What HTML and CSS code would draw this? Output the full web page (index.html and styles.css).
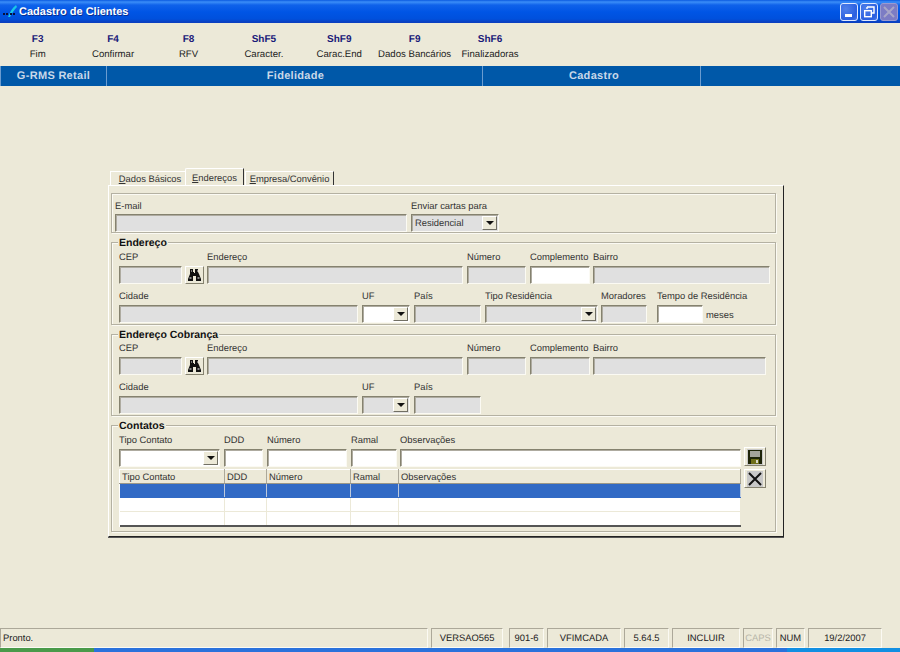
FILE: index.html
```html
<!DOCTYPE html>
<html lang="pt">
<head>
<meta charset="utf-8">
<title>Cadastro de Clientes</title>
<link rel="stylesheet" href="styles.css">
</head>
<body>
<div class="window">
  <header class="titlebar">
    <svg class="app-icon" width="16" height="16" viewBox="0 0 16 16"><path d="M6 13 C8 8 10 4 14 1 L15 3 C12 6 10 9 8 13 Z" fill="#19c8e8"/><path d="M1 9h2v2H1zM4 9h2v2H4zM8 9h2v2H8zM11 9h2v2h-2z" fill="#08103a"/></svg>
    <span class="title-text">Cadastro de Clientes</span>
    <div class="win-btns">
      <div class="win-btn"><svg width="16" height="16" viewBox="0 0 16 16"><rect x="4" y="10" width="7" height="3" fill="#fff"/></svg></div>
      <div class="win-btn"><svg width="16" height="16" viewBox="0 0 16 16"><path d="M6 3h7v6h-2M6 3v2" fill="none" stroke="#fff" stroke-width="1.4"/><rect x="3.7" y="6.7" width="6.6" height="6" fill="none" stroke="#fff" stroke-width="1.4"/></svg></div>
      <div class="win-btn off"><svg width="16" height="16" viewBox="0 0 16 16"><path d="M3 3l10 10M13 3L3 13" stroke="#a8a6c8" stroke-width="2"/></svg></div>
    </div>
  </header>

  <nav class="toolbar">
    <div class="tool"><b>F3</b><span>Fim</span></div>
    <div class="tool"><b>F4</b><span>Confirmar</span></div>
    <div class="tool"><b>F8</b><span>RFV</span></div>
    <div class="tool"><b>ShF5</b><span>Caracter.</span></div>
    <div class="tool"><b>ShF9</b><span>Carac.End</span></div>
    <div class="tool"><b>F9</b><span>Dados Bancários</span></div>
    <div class="tool"><b>ShF6</b><span>Finalizadoras</span></div>
  </nav>

  <div class="crumbs">
    <div class="crumb c1">G-RMS Retail</div>
    <div class="crumb c2">Fidelidade</div>
    <div class="crumb c3">Cadastro</div>
    <div class="crumb c4"></div>
  </div>

  <main class="content">
    <div class="tabs">
      <div class="tab t1"><u>D</u>ados Básicos</div>
      <div class="tab t2 active"><u>E</u>ndereços</div>
      <div class="tab t3"><u>E</u>mpresa/Convênio</div>
    </div>
    <div class="panel">
      <section class="group g-mail">
        <div class="row">
          <div class="field w292 email"><label>E-mail</label><input class="inp" disabled></div>
          <div class="field w88 email"><label>Enviar cartas para</label>
            <div class="combo off"><span>Residencial</span><i class="arrow"></i></div></div>
        </div>
      </section>

      <section class="group g-end">
        <span class="legend">Endereço</span>
        <div class="row">
          <div class="field w63"><label>CEP</label><input class="inp" disabled></div>
          <button class="bin" type="button"><svg width="15" height="14" viewBox="0 0 15 14"><path d="M3 1h3v3h1v1h1V4h0V1h3v3l1 2 2 5v2H9V8H6v5H1v-2l2-5z" fill="#111"/><path d="M2.5 9h2v2h-2zM10.5 9h2v2h-2z" fill="#8a8a8a"/><path d="M4 2h1v2H4zM10 2h1v2h-1z" fill="#777"/></svg></button>
          <div class="field w256 ml-1"><label>Endereço</label><input class="inp" disabled></div>
          <div class="field w59"><label>Número</label><input class="inp" disabled></div>
          <div class="field w60"><label>Complemento</label><input class="inp"></div>
          <div class="field w177 ml-1"><label>Bairro</label><input class="inp" disabled></div>
        </div>
        <div class="row second">
          <div class="field w239"><label>Cidade</label><input class="inp" disabled></div>
          <div class="field w48"><label>UF</label><div class="combo"><span></span><i class="arrow"></i></div></div>
          <div class="field w67"><label>País</label><input class="inp" disabled></div>
          <div class="field w113"><label>Tipo Residência</label><div class="combo off"><span></span><i class="arrow"></i></div></div>
          <div class="field w46 ml-1"><label>Moradores</label><input class="inp" disabled></div>
          <div class="field w46 ml-10"><label class="nowrap">Tempo de Residência</label><input class="inp"></div>
          <span class="meses">meses</span>
        </div>
      </section>

      <section class="group g-cob">
        <span class="legend">Endereço Cobrança</span>
        <div class="row">
          <div class="field w63"><label>CEP</label><input class="inp" disabled></div>
          <button class="bin" type="button"><svg width="15" height="14" viewBox="0 0 15 14"><path d="M3 1h3v3h1v1h1V4h0V1h3v3l1 2 2 5v2H9V8H6v5H1v-2l2-5z" fill="#111"/><path d="M2.5 9h2v2h-2zM10.5 9h2v2h-2z" fill="#8a8a8a"/><path d="M4 2h1v2H4zM10 2h1v2h-1z" fill="#777"/></svg></button>
          <div class="field w256 ml-1"><label>Endereço</label><input class="inp" disabled></div>
          <div class="field w59"><label>Número</label><input class="inp" disabled></div>
          <div class="field w60"><label>Complemento</label><input class="inp" disabled></div>
          <div class="field w173 ml-1"><label>Bairro</label><input class="inp" disabled></div>
        </div>
        <div class="row second">
          <div class="field w239"><label>Cidade</label><input class="inp" disabled></div>
          <div class="field w48"><label>UF</label><div class="combo off"><span></span><i class="arrow"></i></div></div>
          <div class="field w67"><label>País</label><input class="inp" disabled></div>
        </div>
      </section>

      <section class="group g-con">
        <span class="legend">Contatos</span>
        <div class="contact-grid">
          <div class="row">
            <div class="field w101"><label>Tipo Contato</label><div class="combo"><span></span><i class="arrow"></i></div></div>
            <div class="field w39"><label>DDD</label><input class="inp"></div>
            <div class="field w80"><label>Número</label><input class="inp"></div>
            <div class="field w46"><label>Ramal</label><input class="inp"></div>
            <div class="field w341 ml-1"><label>Observações</label><input class="inp"></div>
          </div>
          <button class="sq save" type="button"><svg width="16" height="16" viewBox="0 0 16 16"><rect x="1" y="1" width="14" height="14" fill="#1e2408"/><rect x="3" y="2" width="10" height="6" fill="#a3a39a"/><rect x="4" y="10" width="8" height="5" fill="#6e6e1a"/><rect x="9" y="11" width="2" height="3" fill="#d8d8c8"/></svg></button>
          <table class="grid">
            <colgroup><col class="cA"><col class="cB"><col class="cC"><col class="cD"><col></colgroup>
            <thead><tr><th>Tipo Contato</th><th>DDD</th><th>Número</th><th>Ramal</th><th>Observações</th></tr></thead>
            <tbody>
              <tr class="sel"><td></td><td></td><td></td><td></td><td></td></tr>
              <tr><td></td><td></td><td></td><td></td><td></td></tr>
              <tr><td></td><td></td><td></td><td></td><td></td></tr>
            </tbody>
          </table>
          <button class="sq del" type="button"><svg width="16" height="16" viewBox="0 0 16 16"><path d="M2 2l12 12M14 2L2 14" stroke="#111" stroke-width="2"/></svg></button>
        </div>
      </section>
    </div>
  </main>

  <footer class="statusbar">
    <div class="pane p-main">Pronto.</div>
    <div class="pane p1">VERSAO565</div>
    <div class="pane p2">901-6</div>
    <div class="pane p3">VFIMCADA</div>
    <div class="pane p4">5.64.5</div>
    <div class="pane p5">INCLUIR</div>
    <div class="pane p6 dim">CAPS</div>
    <div class="pane p7">NUM</div>
    <div class="pane p8">19/2/2007</div>
  </footer>
  <div class="taskbar"><div class="start"></div><div class="bar"></div><div class="tray"></div></div>
</div>
</body>
</html>
```

FILE: styles.css
```css
* { box-sizing: border-box; }
html, body { margin: 0; padding: 0; }
body {
  width: 900px; height: 652px; overflow: hidden;
  background: #ece9d8;
  font: 9.4px/14px "Liberation Sans", Arial, sans-serif;
  text-rendering: geometricPrecision;
  color: #222;
}
.window { display: flex; flex-direction: column; width: 900px; height: 652px; }

/* title bar */
.titlebar {
  flex: 0 0 23px; display: flex; align-items: center; padding-left: 2px;
  background: linear-gradient(#0a5ae0 0, #3b8ef8 2px, #0f62ea 5px, #0055e5 12px, #0050dc 19px, #0a3fc0 22px, #0a3fc0 23px);
}
.app-icon { flex: none; margin-right: 1px; }
.title-text { padding-top: 1px; color: #fff; font: bold 11px/14px "Liberation Sans", Arial, sans-serif; text-shadow: 1px 1px 0 #0a2f90; }
.win-btns { margin-left: auto; display: flex; gap: 2px; padding-right: 2px; }
.win-btn {
  width: 18px; height: 18px; border: 1px solid #dfe8ff; border-radius: 3px;
  background: radial-gradient(circle at 30% 30%, #4f80ea, #2a5fe0 70%, #4a78e8);
  display: flex; align-items: center; justify-content: center;
}
.win-btn.off { background: #7c7cc4; border-color: #9a9ad0; }

/* toolbar */
.toolbar { flex: 0 0 43px; display: flex; background: #ece9d8; padding-top: 9px; }
.tool { width: 75.4px; display: flex; flex-direction: column; align-items: center; white-space: nowrap; }
.tool b { padding-top: 1px; font: bold 10px/14px "Liberation Sans", Arial, sans-serif; color: #1a1a78; height: 16px; }
.tool span { font-size: 9.6px; line-height: 14px; color: #222; }

/* blue strip */
.crumbs { flex: 0 0 20px; display: flex; background: #0058a8; }
.crumb {
  padding-top: 1px;
  border-left: 1px solid #6a9cd0;
  color: #c9d8e8; font: bold 11px/19px "Liberation Sans", Arial, sans-serif; text-align: center; letter-spacing: .3px;
}
.c1 { width: 106px; }
.c2 { width: 376px; padding-left: 2px; }
.c3 { width: 218px; padding-left: 5px; }
.c4 { flex: 1; }

/* main */
.content { flex: 1; padding: 82px 0 0 108px; min-height: 0; }
.tabs { display: flex; height: 17px; align-items: flex-end; padding-left: 2px; }
.tab {
  height: 14px; line-height: 13px; white-space: nowrap; text-align: center;
  border-top: 1px solid #fff; border-left: 1px solid #fff; border-right: 1px solid #333;
  color: #333;
}
.t1 { width: 75px; padding-left: 4px; border-right: none; }
.t2 { width: 59px; height: 17px; line-height: 17px; border-top-left-radius: 2px; }
.t3 { width: 89px; margin-left: 1px; }
.panel {
  width: 676px; height: 352px; padding: 7px 0 0 2px;
  border-top: 1px solid #fff; border-left: 1px solid #fff;
  border-right: 1px solid #222; border-bottom: 1px solid #222;
  box-shadow: 0 1px 0 #555;
}

.group {
  position: relative; width: 665px; margin-bottom: 9px;
  border: 1px solid #b4b1a2;
  box-shadow: inset 1px 1px 0 #fbfaf3, 1px 1px 0 #fbfaf3;
}
.g-mail { height: 40px; padding: 5px 0 0 3px; }
.g-end { height: 83px; padding: 7px 0 0 7px; }
.g-cob { height: 82px; padding: 6px 0 0 7px; }
.g-con { height: 107px; padding: 7px 0 0 7px; margin-bottom: 0; }
.legend {
  position: absolute; left: 6px; top: -6px; padding: 0 1px;
  background: #ece9d8; font: bold 10.5px/12px "Liberation Sans", Arial, sans-serif; color: #111; white-space: nowrap;
}

.row { display: flex; gap: 4px; align-items: flex-end; }
.row.second { margin-top: 5px; }
.field { display: flex; flex-direction: column; flex: none; }
.field label { display: block; height: 16px; line-height: 14px; white-space: nowrap; color: #333; }
.field.email label { height: 15px; }
.nowrap { width: 0; }
.w292 { width: 292px; } .w88 { width: 88px; } .w63 { width: 63px; } .w256 { width: 256px; }
.w59 { width: 59px; } .w60 { width: 60px; } .w177 { width: 177px; } .w173 { width: 173px; }
.w239 { width: 239px; } .w48 { width: 48px; } .w67 { width: 67px; } .w113 { width: 113px; }
.w46 { width: 46px; } .w101 { width: 101px; } .w39 { width: 39px; } .w80 { width: 80px; }
.w341 { width: 341px; }
.ml-1 { margin-left: -1px; } .ml-10 { margin-left: 6px; }

.inp, .combo {
  display: block; width: 100%; height: 18px; margin: 0; padding: 0 2px;
  border-style: solid; border-width: 1px;
  border-color: #85826f #fbfaf3 #fbfaf3 #85826f;
  box-shadow: inset 1px 1px 0 #aeaba0;
  background: #fff; border-radius: 0; outline: none; appearance: none;
}
.inp:disabled, .combo.off { background: #e0e0e0; }
.combo { display: flex; align-items: center; justify-content: space-between; padding: 0 1px 0 3px; color: #333; }
.arrow {
  position: relative; flex: none; width: 15px; height: 14px; background: #ece9d8;
  border: 1px solid; border-color: #fff #716f64 #716f64 #fff;
}
.arrow::after {
  content: ""; position: absolute; left: 3px; top: 4px;
  border: 4px solid transparent; border-top-color: #111; border-bottom: 0;
}
.meses { align-self: flex-end; margin-left: -1px; height: 16px; line-height: 16px; color: #333; }

.bin, .sq {
  flex: none; padding: 0; display: flex; align-items: center; justify-content: center;
  background: #ece9d8; border: 1px solid; border-color: #fff #85826f #85826f #fff;
}
.bin { width: 19px; height: 18px; margin-left: -1px; }

.contact-grid { display: grid; grid-template-columns: 622px 22px; column-gap: 3px; row-gap: 2px; align-items: end; }
.sq { width: 22px; height: 19px; }
.sq svg { display: block; background: #c8c8c8; }
.save { margin-bottom: 1px; }
.del { align-self: start; }
.grid {
  width: 622px; table-layout: fixed; border-collapse: collapse;
  border-bottom: 2px solid #555; background: #fff;
}
.cA { width: 105px; } .cB { width: 42px; } .cC { width: 84px; } .cD { width: 48px; }
.grid th {
  height: 14px; padding: 0 2px; text-align: left; font-weight: normal; line-height: 13px; color: #333;
  background: #ece9d8; border-top: 1px solid #fff; border-bottom: 1px solid #9a9788; border-right: 1px solid #aca899; border-left: 1px solid #fff;
}
.grid td { height: 14px; padding: 0; border-right: 1px solid #ece9d8; border-bottom: 1px solid #ece9d8; }
.grid .sel td { background: #316ac5; border-right-color: #bcc9dc; border-bottom-color: #316ac5; }

/* status */
.statusbar { flex: 0 0 20px; display: flex; padding-right: 18px; }
.pane {
  border: 1px solid; border-color: #aca899 #fbfaf3 #fbfaf3 #aca899;
  line-height: 18px; text-align: center; white-space: nowrap; color: #222;
  margin-left: 3px;
}
.p-main { flex: 1; margin: 0; text-align: left; padding-left: 2px; }
.p1 { width: 72px; margin-right: 3px; } .p2 { width: 35px; } .p3 { width: 74px; } .p4 { width: 45px; }
.p5 { width: 68px; } .p6 { width: 30px; } .p7 { width: 29px; } .p8 { width: 74px; }
.dim { color: #b8b6a8; }
.taskbar { flex: 0 0 4px; display: flex; }
.start { width: 94px; background: #4a9a4a; }
.bar { flex: 1; background: #2a72dc; }
.tray { width: 113px; background: #128fe2; }
```
